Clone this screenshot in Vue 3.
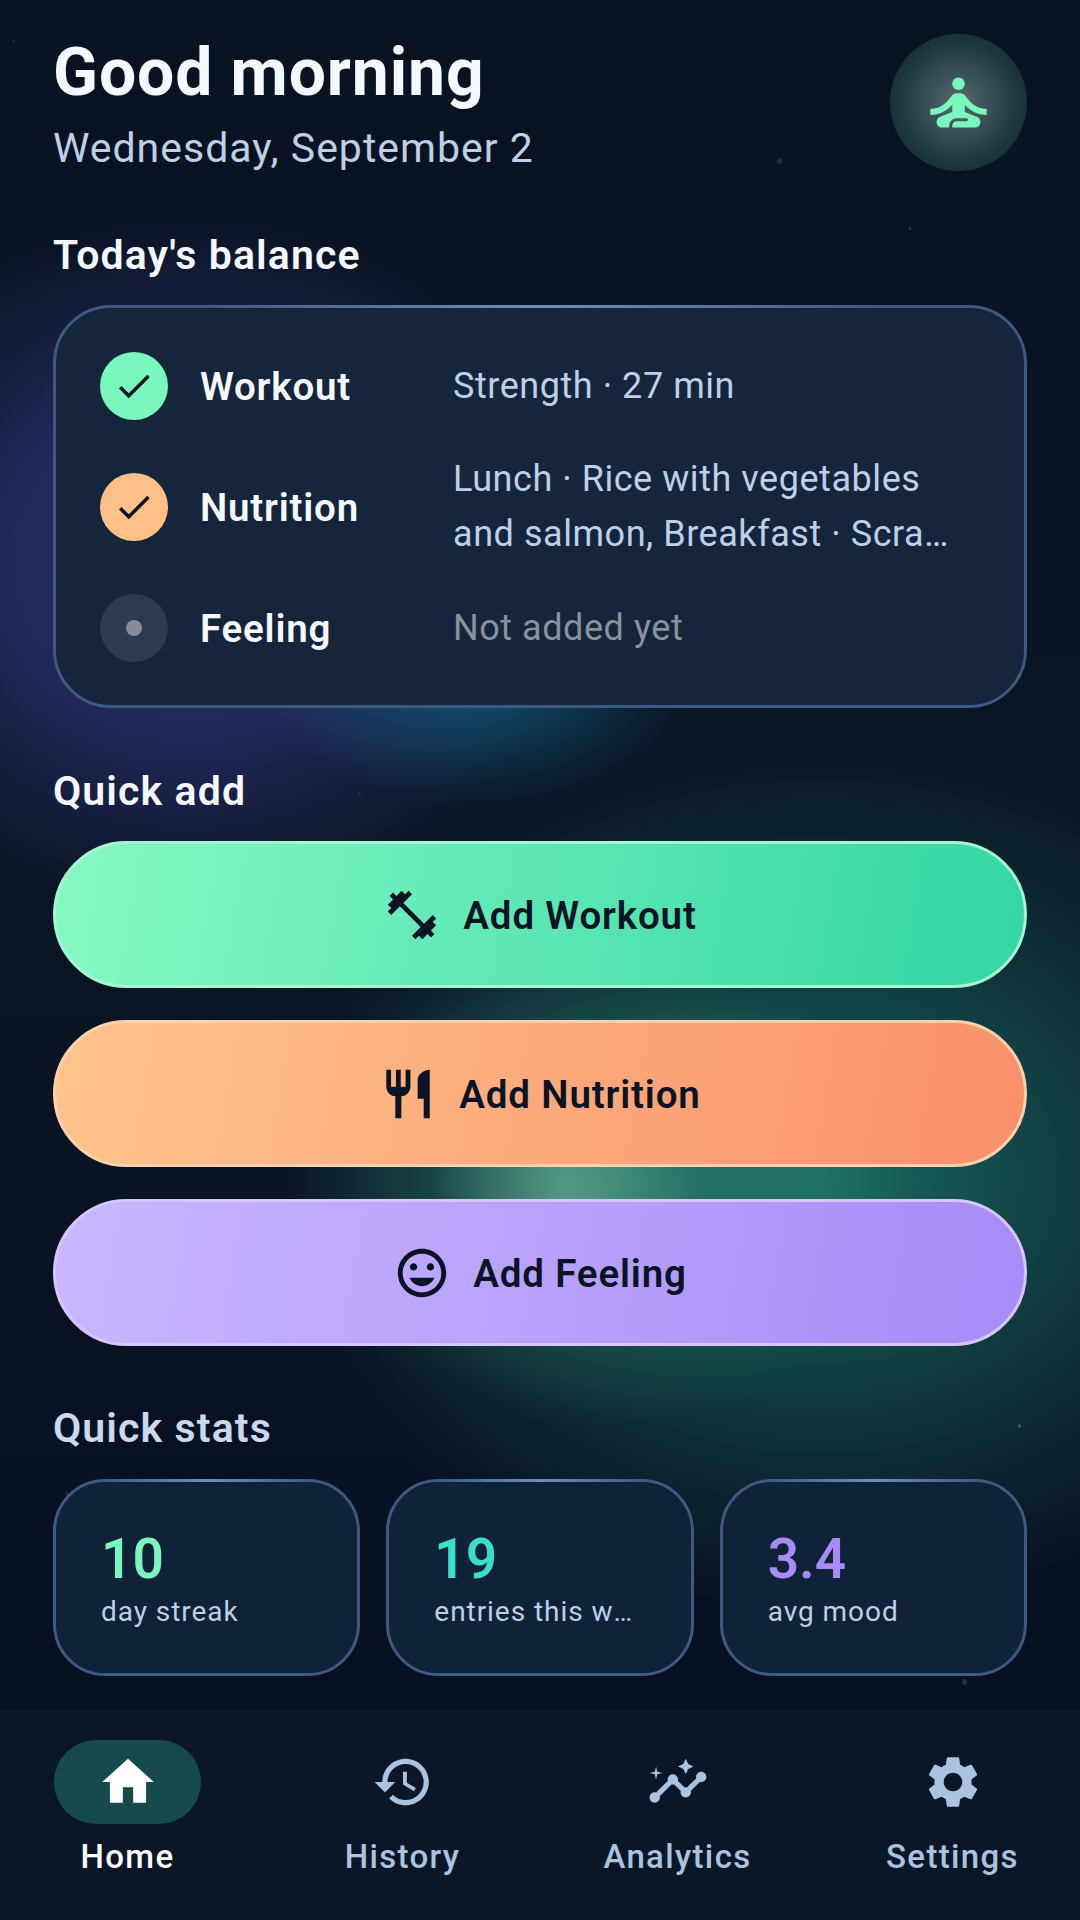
<template>
  <div class="screen">
    <span v-for="(s, i) in stars" :key="i" class="star" :style="{ left: s.x + 'px', top: s.y + 'px', width: s.w + 'px', height: s.h + 'px', background: s.c }"></span>

    <main class="content">
      <header class="header">
        <div class="greeting">
          <h1 class="title">Good morning</h1>
          <p class="date">Wednesday, September 2</p>
        </div>
        <div class="avatar">
          <svg class="avatar-icon" viewBox="0 0 24 24"><circle cx="12" cy="6" r="2" /><path :d="icons.meditate" /></svg>
        </div>
      </header>

      <h2 class="section-title balance-title">Today's balance</h2>
      <section class="balance-card">
        <div v-for="row in balance" :key="row.label" class="balance-row">
          <span :class="['status', row.status]">
            <svg v-if="row.status !== 'empty'" class="check" viewBox="0 0 24 24"><path :d="icons.check" /></svg>
            <span v-else class="dot"></span>
          </span>
          <span class="row-label">{{ row.label }}</span>
          <div :class="['row-value', row.status === 'empty' ? 'muted' : '']">
            <span v-for="line in row.lines" :key="line" class="value-line">{{ line }}</span>
          </div>
        </div>
      </section>

      <h2 class="section-title add-title">Quick add</h2>
      <div class="actions">
        <button v-for="a in actions" :key="a.label" :class="['action', a.kind]">
          <svg class="action-icon" viewBox="0 0 24 24"><path :d="a.icon" /></svg>
          <span>{{ a.label }}</span>
        </button>
      </div>

      <h2 class="section-title stats-title">Quick stats</h2>
      <div class="stats">
        <div v-for="s in stats" :key="s.label" class="stat">
          <span :class="['stat-num', s.kind]">{{ s.num }}</span>
          <span class="stat-label">{{ s.label }}</span>
        </div>
      </div>
    </main>

    <nav class="nav">
      <div v-for="n in nav" :key="n.label" :class="['nav-item', n.active ? 'active' : '']">
        <span class="nav-pill">
          <svg class="nav-icon" viewBox="0 0 24 24"><path v-for="d in n.paths" :key="d" :d="d" /></svg>
        </span>
        <span class="nav-label">{{ n.label }}</span>
      </div>
    </nav>
  </div>
</template>

<script setup>
const icons = {
  meditate: 'M21 16v-2c-2.24 0-4.16-.96-5.6-2.68l-1.34-1.6C13.68 9.26 13.12 9 12.53 9h-1.05c-.59 0-1.15.26-1.53.72l-1.34 1.6C7.16 13.04 5.24 14 3 14v2c2.77 0 5.19-1.17 7-3.25V15l-3.88 1.55c-.67.27-1.12.93-1.12 1.66C5 19.2 5.8 20 6.79 20H9v-.5c0-1.38 1.12-2.5 2.5-2.5h3c.28 0 .5.22.5.5s-.22.5-.5.5h-3c-.83 0-1.5.67-1.5 1.5v.5h7.21c.99 0 1.79-.8 1.79-1.79 0-.73-.45-1.39-1.12-1.66L14 15v-2.25c1.81 2.08 4.23 3.25 7 3.25z',
  check: 'M9 16.17L4.83 12l-1.42 1.41L9 19 21 7l-1.41-1.41z'
}

const balance = [
  { label: 'Workout', lines: ['Strength · 27 min'], status: 'green' },
  { label: 'Nutrition', lines: ['Lunch · Rice with vegetables', 'and salmon, Breakfast · Scrambled eggs'], status: 'orange' },
  { label: 'Feeling', lines: ['Not added yet'], status: 'empty' }
]

const actions = [
  { label: 'Add Workout', kind: 'workout', icon: 'M20.57 14.86L22 13.43 20.57 12 17 15.57 8.43 7 12 3.43 10.57 2 9.14 3.43 7.71 2 5.57 4.14 4.14 2.71 2.71 4.14l1.43 1.43L2 7.71l1.43 1.43L2 10.57 3.43 12 7 8.43 15.57 17 12 20.57 13.43 22l1.43-1.43L16.29 22l2.14-2.14 1.43 1.43 1.43-1.43-1.43-1.43L22 16.29z' },
  { label: 'Add Nutrition', kind: 'nutrition', icon: 'M11 9H9V2H7v7H5V2H3v7c0 2.12 1.66 3.84 3.75 3.97V22h2.5v-9.03C11.34 12.84 13 11.12 13 9V2h-2v7zm5-3v8h2.5v8H21V2c-2.76 0-5 2.24-5 4z' },
  { label: 'Add Feeling', kind: 'feeling', icon: 'M11.99 2C6.47 2 2 6.48 2 12s4.47 10 9.99 10C17.52 22 22 17.52 22 12S17.52 2 11.99 2zM12 20c-4.42 0-8-3.58-8-8s3.58-8 8-8 8 3.58 8 8-3.58 8-8 8zm3.5-9c.83 0 1.5-.67 1.5-1.5S16.33 8 15.5 8 14 8.67 14 9.5s.67 1.5 1.5 1.5zm-7 0c.83 0 1.5-.67 1.5-1.5S9.33 8 8.5 8 7 8.67 7 9.5 7.67 11 8.5 11zm3.5 6.5c2.33 0 4.31-1.46 5.11-3.5H6.89c.8 2.04 2.78 3.5 5.11 3.5z' }
]

const stats = [
  { num: '10', label: 'day streak', kind: 'mint' },
  { num: '19', label: 'entries this week', kind: 'teal' },
  { num: '3.4', label: 'avg mood', kind: 'violet' }
]

const nav = [
  { label: 'Home', active: true, paths: ['M10 20v-6h4v6h5v-8h3L12 3 2 12h3v8z'] },
  { label: 'History', paths: ['M13 3c-4.97 0-9 4.03-9 9H1l3.89 3.89.07.14L9 12H6c0-3.87 3.13-7 7-7s7 3.13 7 7-3.13 7-7 7c-1.93 0-3.68-.79-4.94-2.06l-1.42 1.42C8.27 19.99 10.51 21 13 21c4.97 0 9-4.03 9-9s-4.03-9-9-9zm-1 5v5l4.28 2.54.72-1.21-3.5-2.08V8H12z'] },
  { label: 'Analytics', paths: ['M21 8c-1.45 0-2.26 1.44-1.93 2.51l-3.55 3.56c-.3-.09-.74-.09-1.04 0l-2.55-2.55C12.27 10.45 11.46 9 10 9c-1.45 0-2.27 1.44-1.93 2.52l-4.56 4.55C2.44 15.74 1 16.55 1 18c0 1.1.9 2 2 2 1.45 0 2.26-1.44 1.93-2.51l4.55-4.56c.3.09.74.09 1.04 0l2.55 2.55C12.73 16.55 13.54 18 15 18c1.45 0 2.27-1.44 1.93-2.52l3.56-3.55c1.07.33 2.51-.48 2.51-1.93 0-1.1-.9-2-2-2z', 'M15 9l.94-2.07L18 6l-2.06-.93L15 3l-.92 2.07L12 6l2.08.93zM3.5 11L4 9l2-.5L4 8l-.5-2L3 8l-2 .5L3 9z'] },
  { label: 'Settings', paths: ['M19.14 12.94c.04-.3.06-.61.06-.94 0-.32-.02-.64-.07-.94l2.03-1.58c.18-.14.23-.41.12-.61l-1.92-3.32c-.12-.22-.37-.29-.59-.22l-2.39.96c-.5-.38-1.03-.7-1.62-.94l-.36-2.54c-.04-.24-.24-.41-.48-.41h-3.84c-.24 0-.43.17-.47.41l-.36 2.54c-.59.24-1.13.57-1.62.94l-2.39-.96c-.22-.08-.47 0-.59.22L2.74 8.87c-.12.21-.08.47.12.61l2.03 1.58c-.05.3-.09.63-.09.94s.02.64.07.94l-2.03 1.58c-.18.14-.23.41-.12.61l1.92 3.32c.12.22.37.29.59.22l2.39-.96c.5.38 1.03.7 1.62.94l.36 2.54c.05.24.24.41.48.41h3.84c.24 0 .44-.17.47-.41l.36-2.54c.59-.24 1.13-.56 1.62-.94l2.39.96c.22.08.47 0 .59-.22l1.92-3.32c.12-.22.07-.47-.12-.61l-2.01-1.58zM12 15.6c-1.98 0-3.6-1.62-3.6-3.6s1.62-3.6 3.6-3.6 3.6 1.62 3.6 3.6-1.62 3.6-3.6 3.6z'] }
]

// faint background specks
const stars = [
  { x: 13, y: 39, w: 2, h: 4, c: '#1d3040' },
  { x: 777, y: 158, w: 5, h: 6, c: '#1c2a48' },
  { x: 909, y: 227, w: 2, h: 3, c: '#24405a' },
  { x: 358, y: 792, w: 3, h: 3, c: '#24344c' },
  { x: 1018, y: 1424, w: 3, h: 4, c: '#2a6a5c' },
  { x: 65, y: 1491, w: 4, h: 6, c: '#1a2238' },
  { x: 962, y: 1679, w: 5, h: 6, c: '#262c4c' }
]
</script>

<style>
html, body {
  margin: 0;
  background: #0a1322;
}
</style>

<style scoped>
.screen {
  position: relative;
  width: 1080px;
  height: 1920px;
  overflow: hidden;
  display: flex;
  flex-direction: column;
  font-family: Roboto, "Liberation Sans", sans-serif;
  color: #f5f8ff;
  background:
    radial-gradient(circle 135px at 565px 1183px, rgba(130, 200, 170, 0.5), rgba(130, 200, 170, 0) 100%),
    radial-gradient(ellipse 310px 240px at 600px 1185px, rgba(70, 170, 140, 0.45), rgba(70, 170, 140, 0) 100%),
    radial-gradient(ellipse 540px 430px at 820px 1180px, rgba(30, 135, 115, 0.75), rgba(30, 135, 115, 0.3) 55%, rgba(30, 135, 115, 0) 100%),
    radial-gradient(ellipse 220px 150px at 480px 660px, rgba(20, 110, 150, 0.75), rgba(20, 110, 150, 0) 100%),
    radial-gradient(ellipse 390px 350px at 190px 560px, rgba(70, 70, 170, 0.52), rgba(70, 70, 170, 0.38) 50%, rgba(70, 70, 170, 0) 100%),
    linear-gradient(180deg, #091221 0%, #0a1525 45%, #071020 88%);
}

.star {
  position: absolute;
  border-radius: 50%;
}

.content {
  position: relative;
  flex: 1;
  padding: 0 53px;
  display: flex;
  flex-direction: column;
}

.header {
  display: flex;
  justify-content: space-between;
  align-items: flex-start;
  padding-top: 34px;
}

.title {
  margin: 3px 0 0;
  font-size: 66px;
  line-height: 72px;
  font-weight: 700;
  letter-spacing: 0.9px;
  color: #f5f8ff;
}

.date {
  margin: 12px 0 0;
  font-size: 41px;
  line-height: 54px;
  letter-spacing: 1px;
  color: #bdd0e8;
}

.avatar {
  width: 137px;
  height: 137px;
  border-radius: 50%;
  display: flex;
  align-items: center;
  justify-content: center;
  background: radial-gradient(circle, #5c696f 0%, #3a5158 30%, #1a363b 65%, #12292e 100%);
}

.avatar-icon {
  width: 75px;
  height: 75px;
  fill: #7af7bd;
}

.section-title {
  margin: 0;
  font-size: 41px;
  line-height: 50px;
  font-weight: 600;
  letter-spacing: 1.1px;
  color: #f5f8ff;
}

.balance-title {
  margin-top: 55px;
}

.balance-card {
  position: relative;
  margin-top: 25px;
  box-sizing: border-box;
  height: 403px;
  padding: 0 43px 0 44px;
  border: 3px solid #3e5a82;
  border-radius: 58px;
  background: #15253b;
  display: flex;
  flex-direction: column;
  justify-content: center;
  gap: 32px;
}

.balance-card::before,
.stat::before {
  content: "";
  position: absolute;
  top: -3px;
  left: 15%;
  right: 15%;
  height: 3px;
  background: linear-gradient(90deg, rgba(130, 160, 200, 0), rgba(130, 160, 200, 0.75), rgba(130, 160, 200, 0));
}

.balance-row {
  display: flex;
  align-items: center;
}

.status {
  flex: none;
  width: 68px;
  height: 68px;
  border-radius: 50%;
  display: flex;
  align-items: center;
  justify-content: center;
}

.status.green { background: #7af7bd; }
.status.orange { background: #ffc088; }
.status.empty { background: #2e3c50; }

.check {
  width: 42px;
  height: 42px;
  fill: #0b1522;
}

.dot {
  width: 16px;
  height: 16px;
  border-radius: 50%;
  background: #868d99;
}

.row-label {
  flex: none;
  width: 253px;
  margin-left: 32px;
  padding-top: 1px;
  font-size: 38.5px;
  font-weight: 600;
  letter-spacing: 0.8px;
  color: #f5f8ff;
}

.row-value {
  flex: 1;
  min-width: 0;
  padding-right: 10px;
  font-size: 36px;
  line-height: 55px;
  letter-spacing: 0.55px;
  color: #bdd0e8;
}

.row-value.muted {
  color: #8a929c;
}

.value-line {
  display: block;
  white-space: nowrap;
  overflow: hidden;
  text-overflow: ellipsis;
}

.value-line:only-child {
  padding-top: 2px;
}

.add-title {
  margin-top: 58px;
}

.actions {
  margin-top: 25px;
  display: flex;
  flex-direction: column;
  gap: 32px;
}

.action {
  box-sizing: border-box;
  height: 147px;
  border-radius: 74px;
  border: 3px solid;
  display: flex;
  align-items: center;
  justify-content: center;
  gap: 22px;
  font-family: inherit;
  font-size: 38.5px;
  font-weight: 560;
  letter-spacing: 0.85px;
  color: #0a1424;
}

.action span {
  padding-top: 2px;
}

.action.workout {
  background: linear-gradient(100deg, #86f8c4, #32d6a4);
  border-color: #a4f5d2;
}

.action.nutrition {
  background: linear-gradient(100deg, #ffc48c, #f98f6c);
  border-color: #ffd0ac;
}

.action.feeling {
  background: linear-gradient(100deg, #c9b7ff, #a78bf8);
  border-color: #d5c7fd;
}

.action-icon {
  width: 58px;
  height: 58px;
  fill: #0a1424;
}

.stats-title {
  margin-top: 57px;
  color: #c9d9ef;
}

.stats {
  margin-top: 26px;
  display: grid;
  grid-template-columns: repeat(3, 1fr);
  gap: 26px;
}

.stat {
  position: relative;
  box-sizing: border-box;
  height: 197px;
  min-width: 0;
  padding: 4px 45px 0;
  border: 3px solid #3e5a82;
  border-radius: 52px;
  background: #102237;
  display: flex;
  flex-direction: column;
  justify-content: center;
}

.stat-num {
  font-size: 55px;
  line-height: 60px;
  font-weight: 600;
}

.stat-num.mint { color: #7af7bd; }
.stat-num.teal { color: #38e0cc; }
.stat-num.violet { color: #a78bf8; }

.stat-label {
  margin-top: 5px;
  font-size: 28px;
  line-height: 36px;
  letter-spacing: 0.95px;
  color: #bdd0e8;
  white-space: nowrap;
  overflow: hidden;
  text-overflow: ellipsis;
}

.nav {
  position: relative;
  box-sizing: border-box;
  height: 210px;
  padding: 30px 54px 0;
  background: #0b1726;
  display: flex;
  justify-content: space-between;
}

.nav-item {
  width: 147px;
  display: flex;
  flex-direction: column;
  align-items: center;
}

.nav-pill {
  width: 147px;
  height: 84px;
  border-radius: 42px;
  display: flex;
  align-items: center;
  justify-content: center;
}

.nav-item.active .nav-pill {
  background: #164a4c;
}

.nav-icon {
  width: 62px;
  height: 62px;
  fill: #a9c4e0;
}

.nav-item.active .nav-icon {
  fill: #ffffff;
}

.nav-label {
  margin-top: 12px;
  font-size: 33px;
  line-height: 42px;
  font-weight: 500;
  letter-spacing: 1.35px;
  white-space: nowrap;
  color: #a9c4e0;
}

.nav-item.active .nav-label {
  color: #ffffff;
}
</style>
